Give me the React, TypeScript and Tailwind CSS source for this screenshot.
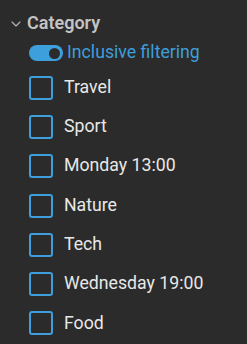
import { ChevronDown } from "lucide-react";

const categories = [
  "Travel",
  "Sport",
  "Monday 13:00",
  "Nature",
  "Tech",
  "Wednesday 19:00",
  "Food",
];

export default function App() {
  return (
    <div
      className="w-[247px] h-[344px] bg-[#2b2b2b] overflow-hidden"
      style={{ fontFamily: "Roboto, 'Liberation Sans', sans-serif" }}
    >
      {/* Header */}
      <div className="flex items-center h-[24px] mt-[11px] pl-[8px]">
        <ChevronDown size={16} strokeWidth={1.6} className="text-[#b8b8b8] mt-[2px]" />
        <span className="ml-[3px] text-[18px] font-semibold text-[#c4c4c4] leading-none">
          Category
        </span>
      </div>

      {/* Toggle */}
      <div className="flex items-center h-[20px] mt-[8px] pl-[29px]">
        <div className="w-[34px] h-[16px] rounded-full bg-[#3d9fdc] flex items-center justify-end pr-[3px]">
          <div className="w-[11px] h-[11px] rounded-full bg-[#2b2b2b]" />
        </div>
        <span className="ml-[4px] text-[17.7px] text-[#3d9fdc] leading-none">
          Inclusive filtering
        </span>
      </div>

      {/* Checkboxes */}
      <div className="flex flex-col mt-[5px]">
        {categories.map((c) => (
          <label key={c} className="flex items-center h-[39.3px] pl-[29px]">
            <span className="w-[24px] h-[24px] rounded-[3px] border-2 border-[#3d9fdc] shrink-0" />
            <span className="ml-[11px] text-[17.7px] text-[#e8e8e8] leading-none">
              {c}
            </span>
          </label>
        ))}
      </div>
    </div>
  );
}
